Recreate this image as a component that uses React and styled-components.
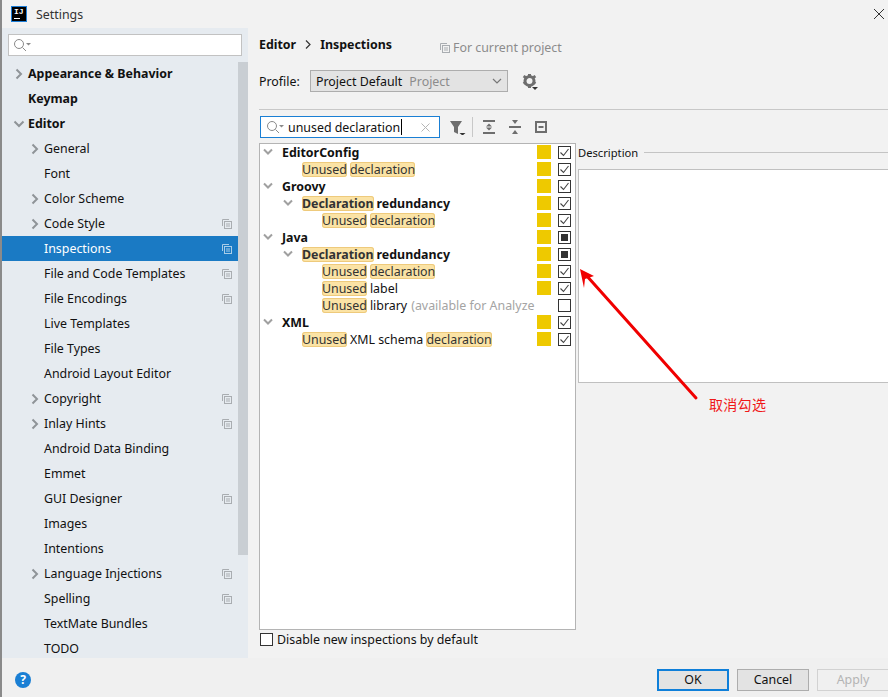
import React from "react";
import styled, { createGlobalStyle } from "styled-components";

const Global = createGlobalStyle`
  html, body { margin: 0; padding: 0; background: #f2f2f2; }
  * { box-sizing: border-box; }
`;
const FONT = `"Noto Sans", "Noto Sans CJK SC", sans-serif`;

const Page = styled.div`
  position: relative; width: 888px; height: 697px; overflow: hidden;
  display: flex; flex-direction: column; background: #f2f2f2;
  font: 12.4px/17px ${FONT}; color: #111;
  border-left: 2px solid #8a8a8a;
`;
const TitleBar = styled.div`
  height: 28px; flex: none; display: flex; align-items: center; padding: 0 2px 0 9px; gap: 9px; color: #333;
`;
const Logo = styled.div`
  width: 16px; height: 16px; background: #000; border: 1px solid #1f7fd8; color: #fff;
  font: bold 8px/10px "Liberation Mono", monospace; padding-left: 2px; position: relative;
  &::after { content: ""; position: absolute; left: 2px; bottom: 2px; width: 6px; height: 1px; background: #fff; }
`;
const CloseX = styled.svg`
  margin-left: auto; margin-right: 1px; width: 12px; height: 12px; stroke: #333; fill: none;
`;
const Body = styled.div`
  display: flex; height: 630px; flex: none;
`;
const Sidebar = styled.aside`
  width: 246px; flex: none; background: #e6ebf0; display: flex; flex-direction: column; overflow: hidden;
`;
const SideSearch = styled.div`
  margin: 6px 6px 5px 6px; height: 22px; flex: none; background: #fff; border: 1px solid #c2c2c2;
  display: flex; align-items: center; padding-left: 4px;
`;
const SideBody = styled.div`
  display: flex; flex: 1; min-height: 0;
`;
const Tree = styled.div`
  width: 236px; flex: none;
`;
const Track = styled.div`
  width: 10px; flex: none; height: 493px; margin-top: 1px; background: #c9ced3;
`;
const NavRow = styled.div`
  height: 25px; display: flex; align-items: center; position: relative;
  padding-left: ${(p) => (p.$level ? 42 : 26)}px;
  font-weight: ${(p) => (p.$bold ? 700 : 400)};
  background: ${(p) => (p.$selected ? "#1a7ac4" : "transparent")};
  color: ${(p) => (p.$selected ? "#fff" : "#111")};
`;
const NavArrow = styled.svg`
  position: absolute; left: ${(p) => (p.$level ? 27 : 11)}px; top: 7px; width: 12px; height: 12px;
  fill: none; stroke: #8f9498; stroke-width: 2;
`;
const CopyGlyph = styled.svg`
  width: 10px; height: 10px; fill: none; stroke: ${(p) => p.$color || "#a9adb1"}; stroke-width: 1;
  flex: none;
`;
const NavCopy = styled(CopyGlyph)`
  position: absolute; left: 220px; top: 8px;
`;
const Main = styled.main`
  flex: 1; min-width: 0; padding-left: 11px; display: flex; flex-direction: column; overflow: hidden;
`;
const Crumbs = styled.div`
  height: 17px; margin-top: 8px; display: flex; align-items: center; font-weight: 700;
`;
const CrumbSep = styled.svg`
  width: 6px; height: 9px; margin: 0 9px 0 9px; stroke: #333; fill: none; stroke-width: 1.2;
`;
const ForProject = styled.div`
  margin-left: 48px; margin-top: 6px; display: flex; align-items: center; gap: 3px; font-weight: 400; color: #8c8c8c;
`;
const ProfileRow = styled.div`
  margin-top: 17px; height: 22px; display: flex; align-items: center;
`;
const ProfileLabel = styled.span`
  width: 51px; flex: none;
`;
const Combo = styled.div`
  width: 198px; height: 22px; background: #e3e3e3; border: 1px solid #adadad;
  display: flex; align-items: center; padding: 0 5px; gap: 7px;
`;
const Muted = styled.span`color: #8c8c8c; font-weight: 400;`;
const ComboCaret = styled.svg`
  margin-left: auto; width: 10px; height: 6px; stroke: #777; fill: none; stroke-width: 1.2;
`;
const Gear = styled.svg`
  margin-left: 14px; width: 18px; height: 18px;
`;
const Divider = styled.div`
  height: 1px; margin-top: 17px; background: #c8c8c8; flex: none;
`;
const Toolbar = styled.div`
  margin-top: 6px; height: 22px; display: flex; align-items: center; flex: none;
`;
const FilterBox = styled.div`
  margin-left: 1px; width: 180px; height: 22px; background: #fff; border: 1px solid #1a7fd4;
  display: flex; align-items: center; padding-left: 5px; gap: 4px; position: relative;
`;
const Caret = styled.span`
  width: 1px; height: 16px; background: #000; margin-left: -3px;
`;
const ClearX = styled.svg`
  position: absolute; right: 9px; top: 6px; width: 9px; height: 9px; stroke: #b5b5b5; fill: none;
`;
const ToolIcon = styled.svg`
  width: ${(p) => p.$w || 14}px; height: 16px; flex: none; margin-left: ${(p) => p.$gap}px; fill: #6e6e6e;
`;
const ToolSep = styled.div`
  width: 1px; height: 20px; background: #c8c8c8; margin-left: 6px;
`;
const Columns = styled.div`
  margin-top: 5px; display: flex; height: 487px; flex: none;
`;
const InspectionTree = styled.div`
  width: 317px; flex: none; background: #fff; border: 1px solid #b4b4b4; overflow: hidden;
`;
const InspRow = styled.div`
  height: 17px; display: flex; align-items: center; position: relative; white-space: nowrap;
  padding-left: ${(p) => 22 + p.$level * 20}px;
  font-weight: ${(p) => (p.$bold ? 700 : 400)};
`;
const InspArrow = styled.svg`
  position: absolute; left: ${(p) => 3 + p.$level * 20}px; top: 4px; width: 10px; height: 8px;
  fill: none; stroke: #a0a0a0; stroke-width: 2;
`;
const Mark = styled.span`
  background: #fbe3a5; box-shadow: inset 0 0 0 1px #eeca7c; border-radius: 3px; margin-right: 3px;
  line-height: 15px; height: 15px; display: inline-block; color: #333;
`;
const Faded = styled.span`color: #a4a4a4; margin-left: 4px; font-weight: 400;`;
const Clip = styled.div`
  width: 215px; overflow: hidden; display: flex; align-items: center; white-space: nowrap;
`;
const Severity = styled.span`
  position: absolute; left: 277px; top: 1px; width: 14px; height: 14px; background: ${(p) => (p.$off ? "transparent" : "#eec900")};
`;
const Box = styled.span`
  position: absolute; left: 298px; top: 2px; width: 13px; height: 13px; background: #fff; border: 1px solid #333;
  display: flex; align-items: center; justify-content: center;
`;
const Dot = styled.span`width: 7px; height: 7px; background: #333;`;
const Desc = styled.section`
  flex: 1; margin-left: 2px; display: flex; flex-direction: column; min-width: 0;
`;
const Legend = styled.div`
  height: 17px; display: flex; align-items: center; gap: 6px; margin-top: 1px; font-size: 11.2px;
  &::after { content: ""; flex: 1; height: 1px; background: #c4c4c4; }
`;
const DescBox = styled.div`
  margin-top: 8px; height: 214px; background: #fff; border: 1px solid #c0c0c0; border-right: none;
`;
const DisableRow = styled.label`
  height: 18px; display: flex; align-items: center; gap: 4px; flex: none;
`;
const PlainBox = styled.span`
  width: 13px; height: 13px; background: #fff; border: 1px solid #333; margin-left: 1px;
`;
const Footer = styled.footer`
  height: 39px; flex: none; display: flex; align-items: flex-start; padding-top: 11px; background: #f0f0f0;
`;
const Help = styled.div`
  margin: 3px 0 0 13px; width: 16px; height: 16px; border-radius: 50%; background: #1a7fd4; color: #fff;
  font: 700 12px/16px ${FONT}; text-align: center;
`;
const Buttons = styled.div`
  margin-left: auto; display: flex; gap: 8px; margin-right: -1px;
`;
const Btn = styled.button`
  width: 72px; height: 22px; padding: 0; font: 12.4px/18px ${FONT};
  background: ${(p) => (p.$disabled ? "#f0f0f0" : "#e3e3e3")};
  color: ${(p) => (p.$disabled ? "#b4b4b4" : "#111")};
  border: ${(p) => (p.$primary ? "2px solid #0f7fd9" : p.$disabled ? "1px solid #d2d2d2" : "1px solid #adadad")};
`;
const Annotation = styled.svg`
  position: absolute; left: 0; top: 0; width: 888px; height: 697px; pointer-events: none;
`;
const Note = styled.span`
  position: absolute; left: 707px; top: 395px; color: #f01818; font-size: 14px; line-height: 18px;
  font-family: "Noto Sans CJK SC", sans-serif; letter-spacing: 0.3px;
`;

const SearchIcon = ({ color = "#8a8a8a" }) => (
  <svg width="18" height="14" viewBox="0 0 18 14" fill="none" stroke={color}>
    <circle cx="6" cy="6" r="4.5" />
    <path d="M9.5 9.5L13 13" />
    <path d="M13 5h5l-2.5 2.5z" fill={color} stroke="none" />
  </svg>
);
const Copy = (props) => (
  <CopyGlyph viewBox="0 0 10 10" {...props}>
    <path d="M.5 7V.5H7" />
    <rect x="2.5" y="2.5" width="7" height="7" />
    <path d="M4 5h4M4 7h4" />
  </CopyGlyph>
);

const NAV = [
  ["Appearance & Behavior", 0, "r", 0, 1],
  ["Keymap", 0, "", 0, 1],
  ["Editor", 0, "d", 0, 1],
  ["General", 1, "r"],
  ["Font", 1, ""],
  ["Color Scheme", 1, "r"],
  ["Code Style", 1, "r", 1],
  ["Inspections", 1, "", 1],
  ["File and Code Templates", 1, "", 1],
  ["File Encodings", 1, "", 1],
  ["Live Templates", 1, ""],
  ["File Types", 1, ""],
  ["Android Layout Editor", 1, ""],
  ["Copyright", 1, "r", 1],
  ["Inlay Hints", 1, "r", 1],
  ["Android Data Binding", 1, ""],
  ["Emmet", 1, ""],
  ["GUI Designer", 1, "", 1],
  ["Images", 1, ""],
  ["Intentions", 1, ""],
  ["Language Injections", 1, "r", 1],
  ["Spelling", 1, "", 1],
  ["TextMate Bundles", 1, ""],
  ["TODO", 1, ""],
];

const m = (t) => <Mark>{t}</Mark>;
const INSP = [
  { level: 0, bold: 1, arrow: 1, box: "c", text: "EditorConfig" },
  { level: 1, box: "c", text: <>{m("Unused")}{m("declaration")}</> },
  { level: 0, bold: 1, arrow: 1, box: "c", text: "Groovy" },
  { level: 1, bold: 1, arrow: 1, box: "c", text: <>{m("Declaration")}redundancy</> },
  { level: 2, box: "c", text: <>{m("Unused")}{m("declaration")}</> },
  { level: 0, bold: 1, arrow: 1, box: "m", text: "Java" },
  { level: 1, bold: 1, arrow: 1, box: "m", text: <>{m("Declaration")}redundancy</> },
  { level: 2, box: "c", text: <>{m("Unused")}{m("declaration")}</> },
  { level: 2, box: "c", text: <>{m("Unused")}label</> },
  { level: 2, box: "", off: 1, text: <Clip>{m("Unused")}library<Faded>(available for Analyze</Faded></Clip> },
  { level: 0, bold: 1, arrow: 1, box: "c", text: "XML" },
  { level: 1, box: "c", text: <>{m("Unused")}XML schema&nbsp;{m("declaration")}</> },
];

export default function App() {
  return (
    <Page>
      <Global />
      <TitleBar>
        <Logo>IJ</Logo>
        <span>Settings</span>
        <CloseX viewBox="0 0 12 12"><path d="M1 1l10 10M11 1L1 11" /></CloseX>
      </TitleBar>
      <Body>
        <Sidebar>
          <SideSearch><SearchIcon /></SideSearch>
          <SideBody>
            <Tree>
              {NAV.map(([name, level, arrow, copy, bold]) => (
                <NavRow key={name} $level={level} $bold={bold} $selected={name === "Inspections"}>
                  {arrow && (
                    <NavArrow $level={level} viewBox="0 0 12 12">
                      <path d={arrow === "r" ? "M3.5 1.5L8 6l-4.5 4.5" : "M1.5 3.5L6 8l4.5-4.5"} />
                    </NavArrow>
                  )}
                  {name}
                  {copy ? (
                    <NavCopy viewBox="0 0 10 10" $color={name === "Inspections" ? "#a9cde8" : undefined}>
                      <path d="M.5 7V.5H7" /><rect x="2.5" y="2.5" width="7" height="7" /><path d="M4 5h4M4 7h4" />
                    </NavCopy>
                  ) : null}
                </NavRow>
              ))}
            </Tree>
            <Track />
          </SideBody>
        </Sidebar>
        <Main>
          <Crumbs>
            Editor
            <CrumbSep viewBox="0 0 6 9"><path d="M1 .5l4 4-4 4" /></CrumbSep>
            Inspections
            <ForProject><Copy color="#a0a0a0" />For current project</ForProject>
          </Crumbs>
          <ProfileRow>
            <ProfileLabel>Profile:</ProfileLabel>
            <Combo>
              Project Default <Muted>Project</Muted>
              <ComboCaret viewBox="0 0 10 6"><path d="M1 1l4 4 4-4" /></ComboCaret>
            </Combo>
            <Gear viewBox="0 0 18 18">
              <circle cx="7.5" cy="9" r="4.5" fill="none" stroke="#6e6e6e" strokeWidth="3" />
              <path d="M6 2h3v2.5H6zM6 13.5h3V16H6zM.8 5.2L2.3 3l2.5 1.6-1.5 2.2zM10.2 11.2l1.5-2.2 2.5 1.6-1.5 2.2zM14.2 5.2L12.7 3l-2.5 1.6 1.5 2.2zM4.8 11.2L3.3 9 .8 10.6l1.5 2.2z" fill="#6e6e6e" />
              <path d="M10 15h6l-3 3z" fill="#333" />
            </Gear>
          </ProfileRow>
          <Divider />
          <Toolbar>
            <FilterBox>
              <SearchIcon />
              unused declaration
              <Caret />
              <ClearX viewBox="0 0 9 9"><path d="M.5.5l8 8M8.5.5l-8 8" /></ClearX>
            </FilterBox>
            <ToolIcon $w={16} $gap={10} viewBox="0 0 16 16">
              <path d="M0 2h12L8 8v7L4 13V8z" />
              <path d="M9.5 14h6L12.5 16.5z" fill="#333" />
            </ToolIcon>
            <ToolSep />
            <ToolIcon $gap={10} viewBox="0 0 14 16">
              <path d="M0 1h12v2H0zM0 13h12v2H0zM6 4.5L9 7.5H3zM3 8.5h6L6 11.5z" />
            </ToolIcon>
            <ToolIcon $gap={12} viewBox="0 0 14 16">
              <path d="M3 1h6L6 5zM0 7h12v2H0zM6 11l3 4H3z" />
            </ToolIcon>
            <ToolIcon $gap={12} viewBox="0 0 14 16">
              <path d="M0 2h12v12H0zM2 4v8h8V4zM3.5 7h5v2h-5z" fillRule="evenodd" />
            </ToolIcon>
          </Toolbar>
          <Columns>
            <InspectionTree>
              {INSP.map((r, i) => (
                <InspRow key={i} $level={r.level} $bold={r.bold}>
                  {r.arrow && (
                    <InspArrow $level={r.level} viewBox="0 0 10 8"><path d="M1 1.5l4 4 4-4" /></InspArrow>
                  )}
                  {r.text}
                  <Severity $off={r.off} />
                  <Box>
                    {r.box === "c" && (
                      <svg width="11" height="11" viewBox="0 0 11 11" fill="none" stroke="#444" strokeWidth="1.1"><path d="M1.5 5.5l3 3 5-6.5" /></svg>
                    )}
                    {r.box === "m" && <Dot />}
                  </Box>
                </InspRow>
              ))}
            </InspectionTree>
            <Desc>
              <Legend>Description</Legend>
              <DescBox />
            </Desc>
          </Columns>
          <DisableRow><PlainBox />Disable new inspections by default</DisableRow>
        </Main>
      </Body>
      <Footer>
        <Help>?</Help>
        <Buttons>
          <Btn $primary>OK</Btn>
          <Btn>Cancel</Btn>
          <Btn $disabled>Apply</Btn>
        </Buttons>
      </Footer>
      <Annotation viewBox="0 0 888 697">
        <path d="M694 398L584 275" stroke="#f00000" strokeWidth="3" strokeLinecap="round" fill="none" />
        <path d="M578 269L592 276 583 279 582 288z" fill="#f00000" />
      </Annotation>
      <Note>取消勾选</Note>
    </Page>
  );
}
